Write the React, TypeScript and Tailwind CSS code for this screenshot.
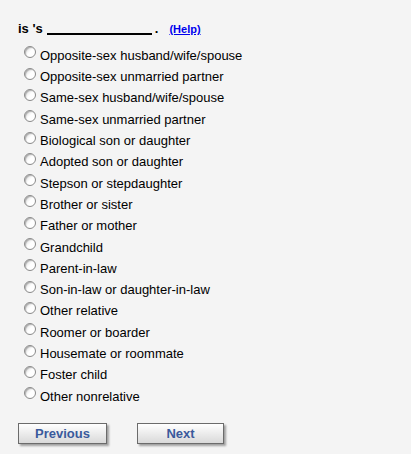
import React from 'react';

const options = [
  'Opposite-sex husband/wife/spouse',
  'Opposite-sex unmarried partner',
  'Same-sex husband/wife/spouse',
  'Same-sex unmarried partner',
  'Biological son or daughter',
  'Adopted son or daughter',
  'Stepson or stepdaughter',
  'Brother or sister',
  'Father or mother',
  'Grandchild',
  'Parent-in-law',
  'Son-in-law or daughter-in-law',
  'Other relative',
  'Roomer or boarder',
  'Housemate or roommate',
  'Foster child',
  'Other nonrelative',
];

const Radio: React.FC = () => (
  <span className="inline-block w-[12px] h-[12px] rounded-full border border-[#8a8a8a] bg-gradient-to-br from-[#d8d8d8] via-white to-white shadow-[inset_1px_1px_1px_rgba(0,0,0,0.25)] shrink-0" />
);

const App: React.FC = () => {
  return (
    <div className="w-[411px] h-[454px] bg-[#f4f4f4] font-['Liberation_Sans',Arial,sans-serif] text-black">
      <div className="pt-[19px] pl-[18px]">
        {/* Question */}
        <div className="flex items-baseline text-[13px] font-bold h-[16px]">
          <span>is 's</span>
          <span className="inline-block w-[105px] ml-[4px] border-b-2 border-black translate-y-[2px]" />
          <span className="ml-[3px]">.</span>
          <a href="#" className="ml-[11px] text-[11px] text-[#0000ee] underline">(Help)</a>
        </div>

        {/* Options */}
        <ul className="mt-[10px] ml-[6px]">
          {options.map((opt) => (
            <li key={opt} className="flex items-center h-[21.3px] text-[13px]">
              <span className="-mt-[3px]"><Radio /></span>
              <span className="ml-[4px]">{opt}</span>
            </li>
          ))}
        </ul>

        {/* Navigation */}
        <div className="flex gap-[30px] mt-[16px]">
          <button className="w-[89px] h-[21px] border border-[#6b6b6b] bg-gradient-to-b from-white to-[#d9d9d9] shadow-[2px_2px_2px_rgba(0,0,0,0.35)] text-[13px] font-bold text-[#3a5a9c]">
            Previous
          </button>
          <button className="w-[87px] h-[21px] border border-[#6b6b6b] bg-gradient-to-b from-white to-[#d9d9d9] shadow-[2px_2px_2px_rgba(0,0,0,0.35)] text-[13px] font-bold text-[#3a5a9c]">
            Next
          </button>
        </div>
      </div>
    </div>
  );
};

export default App;
